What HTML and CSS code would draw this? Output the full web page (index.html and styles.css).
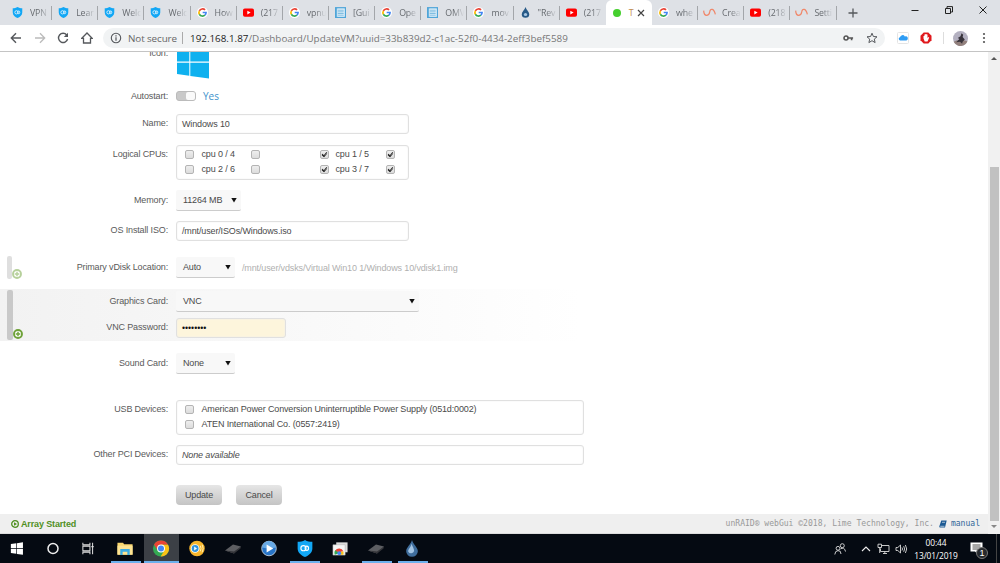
FILE: index.html
```
<!DOCTYPE html>
<html>
<head>
    <meta charset="UTF-8">
    <title>Tower/UpdateVM</title>
    <link rel="stylesheet" href="styles.css">
</head>
<body>
<svg class="defs">
    <symbol id="shield" viewBox="0 0 12 12"><path d="M6 0C7.500 1 9.500 1.300 11.200 1.300V6C11.200 9 8.500 11 6 12C3.500 11 .8 9 .8 6V1.300C2.500 1.300 4.500 1 6 0Z" fill="#12a7f5"/><circle cx="4.900" cy="5.800" r="1.800" fill="none" stroke="#fff" stroke-width=".8"/><ellipse cx="7.300" cy="5.800" rx="1.200" ry="1.500" fill="none" stroke="#fff" stroke-width=".8"/></symbol>
    <symbol id="google" viewBox="0 0 12 12"><circle cx="6" cy="6" r="6" fill="#fff"/><g fill="none" stroke-width="1.800"><path d="M8.800 3.200A3.900 3.900 0 0 0 2.600 4.200" stroke="#ea4335"/><path d="M2.600 4.200A3.900 3.900 0 0 0 2.600 7.900" stroke="#fbbc05"/><path d="M2.600 7.900A3.900 3.900 0 0 0 8.600 8.900" stroke="#34a853"/><path d="M8.600 8.900A3.900 3.900 0 0 0 9.900 6H6.200" stroke="#4285f4"/></g></symbol>
    <symbol id="youtube" viewBox="0 0 12 12"><rect x="0" y="1.500" width="12" height="9.200" rx="2" fill="#f00"/><path d="M4.700 4L8.300 6.100L4.700 8.200Z" fill="#fff"/></symbol>
    <symbol id="board" viewBox="0 0 12 12"><rect x=".6" y=".8" width="10.800" height="10.600" fill="#e4f2fa" stroke="#4fa5d8" stroke-width="1.400"/><path d="M3 3.500H9.500M3 5.300H9.500M3 7.100H9.500M3 8.900H9.500" stroke="#6cb2dc" stroke-width=".9"/><path d="M1.800 1V11" stroke="#4fa5d8" stroke-width="1"/></symbol>
    <symbol id="drop" viewBox="0 0 12 16"><path d="M6 0C7 4 11.500 7 11.500 10.600A5.500 5.200 0 0 1 .5 10.600C.5 7 5 4 6 0Z" fill="#3f6d9c"/><path d="M5.500 3.500C6.500 6 8 8 8 10.300A3 3 0 0 1 2.500 11C2 8.500 5 7 5.500 3.500Z" fill="#a3c4e3"/></symbol>
    <symbol id="droplet" viewBox="0 0 12 16"><path d="M6 0C7 4 11.500 7 11.500 10.600A5.500 5.200 0 0 1 .5 10.600C.5 7 5 4 6 0Z" fill="#285a87"/><ellipse cx="6" cy="11" rx="2.400" ry="2.200" fill="#a9c8e4"/></symbol>
    <symbol id="wave" viewBox="0 0 14 10"><path d="M.7 3Q1 8 3.800 8T7.200 4.500T10 1.700T13.300 7" fill="none" stroke="#f0876a" stroke-width="1.300"/></symbol>
    <symbol id="chip" viewBox="0 0 18 12"><path d="M1 8L9 2L17 4L10 11Z" fill="#5d5e62"/><path d="M1 8L10 9L17 4L16.500 6L10 11Z" fill="#333438"/></symbol>
    <symbol id="chrome" viewBox="0 0 18 18"><circle cx="9" cy="9" r="8.500" fill="#34a853"/><path d="M1.600 4.800A8.500 8.500 0 0 1 16.500 5H9L5.500 11Z" fill="#ea4335"/><path d="M16.500 5A8.500 8.500 0 0 1 8.600 17.500L12.500 11L9 5Z" fill="#fbc116"/><circle cx="9" cy="9" r="4.200" fill="#fff"/><circle cx="9" cy="9" r="3.200" fill="#4285f4"/></symbol>
    <symbol id="plus" viewBox="0 0 10 10"><circle cx="5" cy="5" r="4" fill="#fff" stroke="#6fa239" stroke-width="1.900"/><path d="M5 2.700V7.300M2.700 5H7.300" stroke="#6fa239" stroke-width="1.400"/></symbol>
</svg>

<div class="tabs">
    <div class="tab"><svg><use href="#shield"/></svg><span>VPN</span></div>
    <div class="tab"><svg><use href="#shield"/></svg><span>Lear</span></div>
    <div class="tab"><svg><use href="#shield"/></svg><span>Welc</span></div>
    <div class="tab"><svg><use href="#shield"/></svg><span>Welc</span></div>
    <div class="tab"><svg><use href="#google"/></svg><span>How</span></div>
    <div class="tab"><svg><use href="#youtube"/></svg><span>(217</span></div>
    <div class="tab"><svg><use href="#google"/></svg><span>vpnu</span></div>
    <div class="tab"><svg><use href="#board"/></svg><span>[Gui</span></div>
    <div class="tab"><svg><use href="#google"/></svg><span>Ope</span></div>
    <div class="tab"><svg><use href="#board"/></svg><span>OMV</span></div>
    <div class="tab"><svg><use href="#google"/></svg><span>mov</span></div>
    <div class="tab"><svg><use href="#droplet"/></svg><span>"Rev</span></div>
    <div class="tab before"><svg><use href="#youtube"/></svg><span>(217</span></div>
    <div class="tab active"><i class="dot"></i><span>T</span><svg class="close" viewBox="0 0 8 8"><path d="M1 1L7 7M7 1L1 7" stroke="#444" stroke-width="1.200"/></svg></div>
    <div class="tab"><svg><use href="#google"/></svg><span>whe</span></div>
    <div class="tab"><svg class="w"><use href="#wave"/></svg><span>Crea</span></div>
    <div class="tab"><svg><use href="#youtube"/></svg><span>(218</span></div>
    <div class="tab"><svg class="w"><use href="#wave"/></svg><span>Setti</span></div>
    <svg class="newtab" viewBox="0 0 10 10"><path d="M5 .5V9.500M.5 5H9.500" stroke="#55585c" stroke-width="1.300"/></svg>
    <div class="winbtns">
        <svg viewBox="0 0 8 8"><path d="M.5 4.500H7.500" stroke="#222"/></svg>
        <svg viewBox="0 0 8 8"><path d="M.5 2.500H5.500V7.500H.5ZM2 2.500V.6H7.500V6H5.500" fill="none" stroke="#222"/></svg>
        <svg viewBox="0 0 8 8"><path d="M.5 .5L7.500 7.500M7.500 .5L.5 7.500" stroke="#222"/></svg>
    </div>
</div>

<div class="toolbar">
    <svg class="nav" viewBox="0 0 12 12"><path d="M11 6H1.500M6 1.200L1.300 6L6 10.800" fill="none" stroke="#55585c" stroke-width="1.400"/></svg>
    <svg class="nav" viewBox="0 0 12 12"><path d="M1 6H10.500M6 1.200L10.700 6L6 10.800" fill="none" stroke="#bbb" stroke-width="1.300"/></svg>
    <svg class="nav" viewBox="0 0 12 12"><path d="M9.700 3A4.600 4.600 0 1 0 10.600 7" fill="none" stroke="#55585c" stroke-width="1.400"/><path d="M11 .8V5H6.800Z" fill="#55585c"/></svg>
    <svg class="nav" viewBox="0 0 12 12"><path d="M.8 6.300L6 1L11.200 6.300H9.500V11H2.500V6.300Z" fill="none" stroke="#55585c" stroke-width="1.300"/></svg>
    <div class="omnibox">
        <svg class="info" viewBox="0 0 12 12"><circle cx="6" cy="6" r="4.700" fill="none" stroke="#55585c" stroke-width="1.100"/><path d="M6 5.200V8.800M6 3.200V4.400" stroke="#55585c" stroke-width="1.200"/></svg>
        <span class="secure">Not secure</span>
        <span class="url"><b>192.168.1.87</b>/Dashboard/UpdateVM?uuid=33b839d2-c1ac-52f0-4434-2eff3bef5589</span>
        <svg class="key" viewBox="0 0 12 8"><circle cx="3.300" cy="4" r="2.200" fill="none" stroke="#555" stroke-width="1.700"/><path d="M5.500 4H11M9.400 4V6.500" stroke="#555" stroke-width="1.800"/></svg>
        <svg class="star" viewBox="0 0 12 12"><path d="M6 1.200L7.400 4.500L11 4.800L8.300 7.100L9.100 10.600L6 8.700L2.900 10.600L3.700 7.100L1 4.800L4.600 4.500Z" fill="none" stroke="#55585c"/></svg>
    </div>
    <svg class="ext cloud" viewBox="0 0 12 12"><rect x=".5" y=".5" width="11" height="11" rx="1" fill="#fff" stroke="#e4e4e4"/><path d="M3 8.500A1.700 1.700 0 0 1 3 5.200A2.600 2.600 0 0 1 7.800 4.400A2 2 0 0 1 9.500 8.500Z" fill="#2d9cf4"/></svg>
    <svg class="ext block" viewBox="0 0 12 12"><path d="M3.700 .5H8.300L11.500 3.700V8.300L8.300 11.500H3.700L.5 8.300V3.700Z" fill="#e0191d"/><path d="M3.500 6.500V4H4.400V2.500H5.400V2H6.500V2.500H7.500V6L8.500 5L9.200 5.500L7.500 9.500H4.700Z" fill="#fff"/></svg>
    <i class="split"></i>
    <svg class="avatar" viewBox="0 0 14 14"><circle cx="7" cy="7" r="7" fill="#b3b0c0"/><path d="M.6 10Q5 7 13.400 9.500A7 7 0 0 1 2 12Z" fill="#92807c"/><path d="M8 2L9.500 3.500L9 5.500L11 8L9 10L8.500 12L6.500 10L3 10.500L6 7.500L4.500 6.500L7 5Z" fill="#37333b"/></svg>
    <svg class="more" viewBox="0 0 4 12"><circle cx="2" cy="2" r="1.100"/><circle cx="2" cy="6" r="1.100"/><circle cx="2" cy="10" r="1.100"/></svg>
</div>

<div class="view">
<div class="page">
    <div class="form">
        <div class="row r-icon">
            <label>Icon:</label>
            <svg class="winlogo" viewBox="0 0 32 33"><path d="M0 5L12.300 3.300V15.500H0ZM13.300 3.200L32 .5V15.500H13.300ZM0 16.800H12.300V29.700L0 28ZM13.300 16.800H32V32.500L13.300 29.900Z" fill="#0fb1ef"/></svg>
        </div>
        <div class="row r-auto">
            <label>Autostart:</label>
            <span class="switch"><i></i></span><span class="yes">Yes</span>
        </div>
        <div class="row r-name">
            <label>Name:</label>
            <div class="field">Windows 10</div>
        </div>
        <div class="row r-cpu">
            <label>Logical CPUs:</label>
            <div class="field cpus">
                <i class="cb"></i><span>cpu 0 / 4</span><i class="cb"></i><i class="cb on"></i><span>cpu 1 / 5</span><i class="cb on"></i>
                <i class="cb"></i><span>cpu 2 / 6</span><i class="cb"></i><i class="cb on"></i><span>cpu 3 / 7</span><i class="cb on"></i>
            </div>
        </div>
        <div class="row r-mem">
            <label>Memory:</label>
            <div class="select mem">11264 MB<i></i></div>
        </div>
        <div class="row r-iso">
            <label>OS Install ISO:</label>
            <div class="field">/mnt/user/ISOs/Windows.iso</div>
        </div>
        <div class="group disk">
            <div class="bar"></div><svg class="add"><use href="#plus"/></svg>
            <div class="row">
                <label>Primary vDisk Location:</label>
                <div class="select">Auto<i></i></div><span class="path">/mnt/user/vdsks/Virtual Win10 1/Windows 10/vdisk1.img</span>
            </div>
        </div>
        <div class="group gpu">
            <div class="bar"></div><svg class="add"><use href="#plus"/></svg>
            <div class="row">
                <label>Graphics Card:</label>
                <div class="select wide">VNC<i></i></div>
            </div>
            <div class="row r-pass">
                <label>VNC Password:</label>
                <div class="field pass">••••••••</div>
            </div>
        </div>
        <div class="row r-sound">
            <label>Sound Card:</label>
            <div class="select">None<i></i></div>
        </div>
        <div class="row r-usb">
            <label>USB Devices:</label>
            <div class="field long usb">
                <i class="cb"></i><span>American Power Conversion Uninterruptible Power Supply (051d:0002)</span>
                <i class="cb"></i><span>ATEN International Co. (0557:2419)</span>
            </div>
        </div>
        <div class="row r-pci">
            <label>Other PCI Devices:</label>
            <div class="field long"><em>None available</em></div>
        </div>
        <div class="row r-btn">
            <label></label>
            <div class="btn">Update</div><div class="btn">Cancel</div>
        </div>
    </div>
    <div class="footer">
        <svg class="play" viewBox="0 0 8 8"><circle cx="4" cy="4" r="3.300" fill="none" stroke="#4f8f1f" stroke-width="1.300"/><path d="M3 2.200L6 4L3 5.800Z" fill="#4f8f1f"/></svg>
        <b>Array Started</b>
        <span class="copy">unRAID® webGui ©2018, Lime Technology, Inc.</span>
        <svg class="book" viewBox="0 0 8 8"><path d="M2.300 .5H7.700L6 7.500H.8Q0 7 .4 6Z" fill="#1c5a94"/><path d="M3 2.300H6M1.300 6.300H5.500" stroke="#dce6ee" stroke-width=".7"/></svg>
        <span class="manual">manual</span>
    </div>
</div>
<div class="scroll"><i class="up"></i><div class="thumb"></div><i class="down"></i></div>
</div>

<div class="taskbar">
    <div class="app"><svg viewBox="0 0 18 18"><path d="M2.500 4.300L8.300 3.500V8.700H2.500ZM9 3.400L15.300 2.500V8.700H9ZM2.500 9.400H8.300V14.600L2.500 13.800ZM9 9.400H15.300V15.600L9 14.700Z" fill="#fff"/></svg></div>
    <div class="app"><svg viewBox="0 0 18 18"><circle cx="9" cy="9" r="5.300" fill="none" stroke="#eee" stroke-width="1.600"/></svg></div>
    <div class="app"><svg viewBox="0 0 18 18"><path d="M2.500 3V5H10V3M2.500 15V13H10V15M2.500 6.500H10V11.500H2.500ZM12.800 3V15M11.500 7H14" fill="none" stroke="#ddd" stroke-width="1.100"/></svg></div>
    <div class="app open"><svg viewBox="0 0 18 18"><path d="M1 3H7L8 4.500H17V15.500H1Z" fill="#f8d66f"/><path d="M1 6H17V15.500H1Z" fill="#fde493"/><path d="M4 9.500H14V16H11.500V12.500H6.500V16H4Z" fill="#3cace4"/></svg></div>
    <div class="app open current"><svg><use href="#chrome"/></svg></div>
    <div class="app"><svg viewBox="0 0 18 18"><circle cx="9" cy="9" r="8.200" fill="#f7b52b"/><circle cx="7" cy="9" r="4.600" fill="#fff"/><circle cx="7" cy="9" r="3.600" fill="#2f93dc"/><path d="M6 7L9 9L6 11Z" fill="#fff"/><path d="M12.500 6Q14 9 12.500 12M14.500 5Q16.500 9 14.500 13" fill="none" stroke="#fff1b8"/></svg></div>
    <div class="app"><svg><use href="#chip"/></svg></div>
    <div class="app"><svg viewBox="0 0 18 18"><circle cx="9" cy="9" r="7.700" fill="#2875c8" stroke="#b9c9d8"/><path d="M2 8A7 7 0 0 1 16 8Q9 10 2 8Z" fill="#68aae6"/><path d="M6.500 4.700L13.500 9L6.500 13.300Z" fill="#fff"/></svg></div>
    <div class="app open"><svg><use href="#shield"/></svg></div>
    <div class="app"><svg viewBox="0 0 18 18"><path d="M5 2.500H17V13H5Z" fill="#ddd"/><path d="M1.500 5H14.500V16H1.500Z" fill="#f6f6f6" stroke="#aaa" stroke-width=".5"/><path d="M3.500 15.500A4.700 4.700 0 0 1 5 10L8 14Z" fill="#34a853"/><path d="M4 11.500A4.700 4.700 0 0 1 12.500 12L8 13Z" fill="#ea4335"/><path d="M12.500 12A5 5 0 0 1 12.500 15.500H8V13Z" fill="#fbc116"/><circle cx="8.200" cy="14" r="2" fill="#4285f4"/></svg></div>
    <div class="app open"><svg><use href="#chip"/></svg></div>
    <div class="app open"><svg><use href="#drop"/></svg></div>
    <div class="tray">
        <svg class="people" viewBox="0 0 12 12"><g fill="none" stroke="#ddd" stroke-width=".9"><circle cx="4" cy="5.300" r="1.900"/><path d="M.8 11.500Q1 7.800 4 7.600T7 11"/><circle cx="8.300" cy="2.700" r="2"/><path d="M6.500 6Q8 4.700 9.500 5.300T11.500 8.500"/></g></svg>
        <svg class="chev" viewBox="0 0 10 6"><path d="M1 5L5 1L9 5" fill="none" stroke="#eee" stroke-width="1.100"/></svg>
        <svg class="net" viewBox="0 0 13 12"><path d="M4.500 2.500H12V8.500H3.500V5.500M6 10.500H10M7.800 8.500V10.500M1 1.200H4.500V4.500H1ZM2.700 4.500V10" fill="none" stroke="#ddd" stroke-width=".9"/></svg>
        <svg class="vol" viewBox="0 0 13 12"><path d="M1 4.500H2.800L5.500 2V10L2.800 7.500H1ZM7 4.500Q8 6 7 7.500M8.700 3.200Q10.500 6 8.700 8.800M10.400 2Q13 6 10.400 10" fill="none" stroke="#ddd" stroke-width=".9"/></svg>
        <div class="clock">00:44<br>13/01/2019</div>
        <div class="notes"><svg viewBox="0 0 13 13"><path d="M.5 .5H12.500V9.500H8V12.500L5 9.500H.5Z" fill="#fff"/><path d="M2.500 3H10.500M2.500 5H10.500M2.500 7H8" stroke="#222" stroke-width=".8"/></svg><span class="count">1</span></div>
        <i class="peek"></i>
    </div>
</div>
</body>
</html>
```
FILE: styles.css
```
* {
    box-sizing: border-box;
}
body {
    margin: 0;
    width: 1000px;
    height: 563px;
    overflow: hidden;
    background: #fff;
    font-family: "Liberation Sans", Arial, sans-serif;
    font-size: 9px;
    letter-spacing: -.14px;
    color: #5a5a5a;
}
svg {
    display: block;
    flex: none;
}
.defs {
    display: none;
}

/* browser */
.tabs {
    display: flex;
    height: 25px;
    padding-left: 6px;
    background: #dee1e6;
    font-family: "Open Sans", "Noto Sans", sans-serif;
    font-size: 8.8px;
    color: #666a6f;
}
.tab {
    display: flex;
    align-items: center;
    flex: none;
    width: 46.15px;
    height: 25px;
    padding-left: 6px;
    background: linear-gradient(#a3a6aa, #a3a6aa) right 6px / 1px 14px no-repeat;
}
.tab svg {
    width: 11px;
    height: 11px;
}
.tab svg.w {
    width: 13px;
    margin: 0 -1px;
}
.tab span {
    width: 22px;
    margin-left: 7px;
    white-space: nowrap;
    -webkit-mask-image: linear-gradient(to right, #000 8px, transparent 19px);
    mask-image: linear-gradient(to right, #000 8px, transparent 19px);
}
.tab.before {
    background: none;
}
.tab.active {
    background: #fff;
    border-radius: 6px 6px 0 0;
    padding-left: 7px;
}
.tab.active span {
    width: 6px;
    margin-left: 8px;
    color: #c08a50;
    -webkit-mask-image: none;
    mask-image: none;
}
.tab svg.close {
    width: 8px;
    height: 8px;
    margin-left: 2px;
}
.dot {
    width: 8px;
    height: 8px;
    border-radius: 50%;
    background: #45cf2e;
}
.newtab {
    width: 10px;
    height: 10px;
    margin: 8px 0 0 11px;
}
.winbtns {
    display: flex;
    gap: 26px;
    margin: 6px 13px 0 auto;
}
.winbtns svg {
    width: 8px;
    height: 8px;
}
.toolbar {
    display: flex;
    align-items: center;
    height: 27px;
    padding-left: 10px;
    border-bottom: 1px solid #c4c4c4;
    letter-spacing: 0;
}
.nav {
    width: 12px;
    height: 12px;
    margin-right: 11.5px;
}
.omnibox {
    display: flex;
    align-items: center;
    width: 782px;
    height: 20px;
    margin-left: -1px;
    padding-left: 7px;
    border-radius: 10px;
    background: #f1f3f4;
    font-family: "Open Sans", "Noto Sans", sans-serif;
    font-size: 9.85px;
    color: #777;
    white-space: nowrap;
}
.info {
    width: 12px;
    height: 12px;
}
.secure {
    width: 55px;
    margin-left: 6px;
    border-right: 1px solid #aaa;
    line-height: 12px;
    letter-spacing: -.1px;
    color: #666;
}
.url {
    margin-left: 7px;
}
.url b {
    font-weight: normal;
    color: #222;
}
.key {
    width: 11px;
    height: 8px;
    margin-left: auto;
}
.star {
    width: 12px;
    height: 12px;
    margin: 0 7px 0 12px;
}
.ext {
    width: 12px;
    height: 12px;
    margin-left: 12px;
}
.ext.block {
    margin-left: 11px;
}
.split {
    width: 1px;
    height: 12px;
    margin: 0 9px 0 11px;
    background: #ddd;
}
.avatar {
    width: 15px;
    height: 15px;
}
.more {
    width: 4px;
    height: 12px;
    margin-left: 14px;
    fill: #555;
}

/* page */
.view {
    display: flex;
    height: 482px;
}
.page {
    width: 988px;
}
.form {
    height: 462px;
    overflow: hidden;
}
.row {
    display: flex;
    align-items: center;
    white-space: nowrap;
}
.row label {
    width: 168px;
    margin-right: 8px;
    padding-bottom: 2px;
    flex: none;
    text-align: right;
}
.r-icon {
    height: 33px;
    margin-top: -6px;
    align-items: flex-start;
}
.r-icon label {
    padding-top: 2px;
}
.winlogo {
    width: 32px;
    height: 33px;
    margin-left: 1px;
}
.r-auto {
    height: 20px;
    margin-top: 7px;
}
.r-auto label {
    padding-bottom: 0;
}
.switch {
    width: 20px;
    height: 10px;
    border: 1px solid #bbb;
    border-radius: 3px;
    background: #c9c9c9;
}
.switch i {
    display: block;
    width: 9px;
    height: 8px;
    margin-left: 9px;
    border-radius: 2px;
    background: #fafafa;
}
.yes {
    margin-left: 7px;
    font-family: "Open Sans", "Noto Sans", sans-serif;
    font-size: 10px;
    letter-spacing: 0;
    color: #3e92cc;
}
.field {
    width: 233px;
    height: 20px;
    padding-left: 5px;
    line-height: 18px;
    border: 1px solid #e0e0e0;
    border-radius: 3px;
    background: #fff;
    box-shadow: inset 0 0 2px #eee;
    color: #4a4a4a;
}
.field.long {
    width: 408px;
}
.r-name {
    margin-top: 8px;
}
.r-cpu {
    margin-top: 11px;
    align-items: flex-start;
}
.r-cpu label, .r-usb label {
    padding-top: 4px;
}
.cpus, .usb {
    display: grid;
    grid-template-rows: 15px 15px;
    align-items: center;
    height: 35px;
    padding: 1px 0 0 8px;
    line-height: 15px;
}
.cpus {
    grid-template-columns: 17px 49px 69px 12px 54px 20px;
}
.usb {
    grid-template-columns: 17px 1fr;
}
.cpus span:nth-child(6n+5) {
    padding-left: 4px;
}
.cpus span, .usb span {
    margin-left: -.5px;
}
.cb {
    width: 9px;
    height: 9px;
    border: 1px solid #b4b4b4;
    border-radius: 2px;
    background: linear-gradient(#eee, #dcdcdc);
}
.cb.on:after {
    content: '';
    display: block;
    box-sizing: content-box;
    width: 1.5px;
    height: 4px;
    margin: 0 0 0 2px;
    border: solid #222;
    border-width: 0 1px 1px 0;
    box-shadow: .5px .5px 0 #222;
    transform: rotate(40deg);
}
.select {
    display: flex;
    align-items: center;
    justify-content: space-between;
    width: 59px;
    height: 21px;
    padding: 0 4px 0 7px;
    border-radius: 2px;
    border-bottom: 1px solid #ccc;
    background: #f8f8f8;
    color: #4a4a4a;
}
.select i {
    width: 6px;
    height: 5px;
    background: #111;
    clip-path: polygon(0 0, 100% 0, 50% 100%);
}
.select.mem {
    width: 65px;
}
.select.wide {
    width: 243px;
}
.r-mem {
    margin-top: 10px;
}
.r-iso {
    margin-top: 10px;
}
.group {
    position: relative;
}
.bar {
    position: absolute;
    left: 7px;
    top: 1px;
    border-radius: 2px;
    background: #c9c9c9;
}
.add {
    position: absolute;
    width: 10px;
    height: 10px;
}
.disk {
    margin-top: 15px;
    height: 24px;
    padding-top: 1px;
}
.disk .bar {
    width: 5px;
    height: 23px;
    top: 0;
    opacity: .6;
}
.disk .add {
    left: 12px;
    top: 13px;
    opacity: .5;
}
.path {
    margin-left: 7px;
    padding-top: 1px;
    color: #b0b0b0;
}
.gpu {
    height: 52px;
    margin-top: 9px;
    padding-top: 2px;
    background: linear-gradient(to right, #f2f2f2, #fff 580px);
}
.gpu .bar {
    width: 6px;
    height: 50px;
}
.gpu .add {
    left: 13px;
    top: 40px;
}
.r-pass {
    margin-top: 6px;
}
.field.pass {
    width: 110px;
    background: #fdf5dc;
    color: #111;
    font-size: 8.7px;
    letter-spacing: 0;
}
.r-sound {
    margin-top: 12px;
}
.r-usb {
    margin-top: 26px;
    align-items: flex-start;
}
.r-pci {
    margin-top: 10px;
}
.r-btn {
    margin-top: 20px;
}
.btn {
    width: 46px;
    height: 20px;
    margin-right: 14px;
    border-radius: 4px;
    background: linear-gradient(#e6e6e6, #c4c4c4);
    line-height: 20px;
    text-align: center;
    color: #4a4a4a;
}
.footer {
    display: flex;
    align-items: center;
    height: 20px;
    padding: 0 8px 0 11px;
    background: #efefef;
    border-bottom: 1px solid #ddd;
    color: #4f8f1f;
}
.play {
    width: 8px;
    height: 8px;
    margin-right: 2px;
}
.copy, .manual {
    font-family: "DejaVu Sans Mono", monospace;
    font-size: 8.05px;
    letter-spacing: 0;
}
.copy {
    margin-left: auto;
    color: #999;
}
.book {
    width: 8px;
    height: 8px;
    margin: 0 4px 0 5px;
}
.manual {
    color: #2f6699;
}
.scroll {
    display: flex;
    flex-direction: column;
    align-items: center;
    width: 12px;
    background: #f1f1f1;
}
.scroll i {
    border: solid transparent;
}
.scroll .up {
    margin-top: 5px;
    border-width: 0 3px 3px;
    border-bottom-color: #555;
}
.thumb {
    width: 9px;
    height: 354px;
    margin-top: 107px;
    background: #c1c1c1;
}
.scroll .down {
    margin-top: 4px;
    border-width: 3px 3px 0;
    border-top-color: #888;
}

/* taskbar */
.taskbar {
    display: flex;
    height: 29px;
    background: #050a12;
}
.app {
    display: flex;
    align-items: center;
    justify-content: center;
    flex: none;
    width: 35.9px;
    height: 29px;
    padding-right: 1px;
    border-bottom: 1px solid transparent;
}
.app svg {
    width: 18px;
    height: 17px;
}
.open {
    background: linear-gradient(#6cb0ec, #6cb0ec) center bottom / 30px 2px no-repeat;
    background-origin: border-box;
}
.current {
    background-color: #3c4046;
    background-size: 36px 2px;
}
.tray {
    display: flex;
    align-items: center;
    margin-left: auto;
    letter-spacing: 0;
}
.people {
    width: 12px;
    height: 12px;
    margin-right: 15px;
}
.chev {
    width: 10px;
    height: 6px;
    margin-right: 6px;
}
.net, .vol {
    width: 13px;
    height: 12px;
    margin-right: 5px;
}
.clock {
    width: 46px;
    font-family: "Open Sans", "Noto Sans", sans-serif;
    font-size: 8.4px;
    letter-spacing: -.1px;
    line-height: 13px;
    text-align: center;
    color: #fff;
}
.notes {
    position: relative;
    margin-left: 11px;
}
.notes svg {
    width: 13px;
    height: 13px;
}
.count {
    position: absolute;
    left: 6px;
    top: 5px;
    width: 12px;
    height: 12px;
    border: 1px solid #777;
    border-radius: 50%;
    background: #26292d;
    font-size: 9px;
    line-height: 10px;
    text-align: center;
    color: #fff;
}
.peek {
    width: 1px;
    height: 29px;
    margin: 0 3px 0 13px;
    background: #444;
}
```
